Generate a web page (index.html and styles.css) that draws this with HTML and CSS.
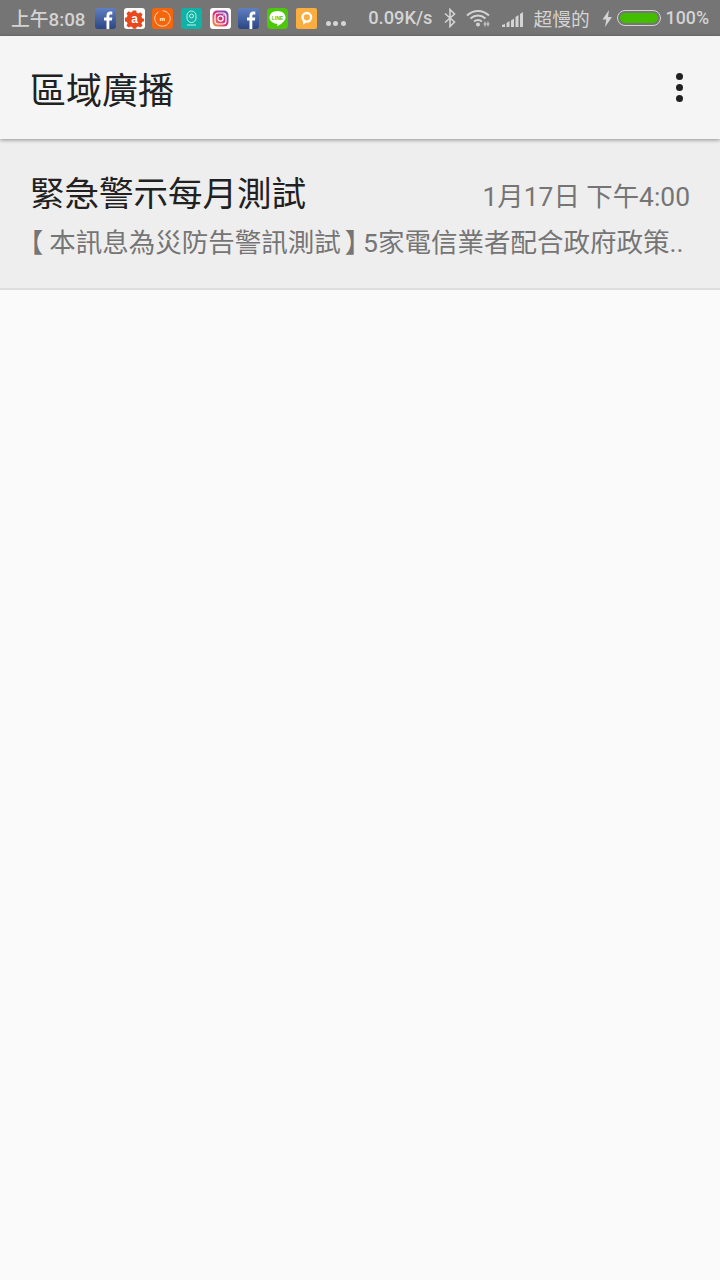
FILE: index.html
```html
<!DOCTYPE html>
<html lang="zh-Hant">

<head>
    <meta charset="UTF-8">
    <meta name="viewport" content="width=device-width, initial-scale=1.0">
    <title>區域廣播</title>
    <link rel="stylesheet" href="styles.css">
</head>

<body>
    <div class="status-bar">
        <span class="status-time">上午8:08</span>
        <div class="status-apps">
            <svg class="app-icon" viewBox="0 0 21 21">
                <defs>
                    <linearGradient id="fbBlue" x1="0" y1="0" x2="0" y2="1">
                        <stop offset="0" stop-color="#5f7fc0"></stop>
                        <stop offset="1" stop-color="#2c4685"></stop>
                    </linearGradient>
                    <linearGradient id="igGrad" x1="0" y1="1" x2="1" y2="0">
                        <stop offset="0" stop-color="#f6a13c"></stop>
                        <stop offset="0.5" stop-color="#d6327f"></stop>
                        <stop offset="1" stop-color="#5b52c8"></stop>
                    </linearGradient>
                </defs>
                <rect width="21" height="21" rx="3" fill="url(#fbBlue)"></rect>
                <path d="M11.5 21v-8.5H9V9.6h2.5V7.6c0-2.6 1.5-4 3.8-4 .9 0 1.7.1 2 .1v2.7h-1.5c-1.2 0-1.5.6-1.5 1.5v1.7h3l-.4 2.9h-2.6V21z" fill="#fff"></path>
            </svg>
            <svg class="app-icon" viewBox="0 0 21 21">
                <rect width="21" height="21" rx="3" fill="#fff"></rect>
                <path d="M8.8 2.5h3.4l.5 2.2 1.6.7 2-1.2 2.3 2.4-1.2 1.9.7 1.7 2 .5v2.6l-2 .6-.7 1.6 1.2 2-2.3 2-2-1-1.6.6-.5 1.6H8.8l-.5-1.6-1.6-.6-2 1-2.3-2 1.2-2-.7-1.6-2-.6V9.7l2-.5.7-1.7-1.2-1.9 2.3-2.4 2 1.2 1.6-.7z" fill="#e9481d"></path>
                <text class="icon-letter" x="10.5" y="14.5" font-size="12" fill="#fff">a</text>
            </svg>
            <svg class="app-icon" viewBox="0 0 21 21">
                <rect width="21" height="21" rx="3" fill="#f4650c"></rect>
                <path d="M6.5 3.9a7.7 7.7 0 1 0 4-1.1" fill="none" stroke="#ffd9bf" stroke-width="1"></path>
                <text class="icon-letter" x="10.5" y="13" font-size="6" fill="#fff">m</text>
            </svg>
            <svg class="app-icon" viewBox="0 0 21 21">
                <rect width="21" height="21" rx="3" fill="#0eb3a6"></rect>
                <rect x="6" y="3" width="9" height="11.5" rx="4.5" fill="none" stroke="#c9f0ec" stroke-width="1"></rect>
                <circle cx="10.5" cy="8" r="2" fill="none" stroke="#c9f0ec" stroke-width="1"></circle>
                <path d="M6 17h9" stroke="#c9f0ec" stroke-width="1"></path>
            </svg>
            <svg class="app-icon" viewBox="0 0 21 21">
                <rect width="21" height="21" rx="3" fill="#fff"></rect>
                <rect x="2.5" y="2.5" width="16" height="16" rx="4.5" fill="url(#igGrad)"></rect>
                <rect x="5" y="5" width="11" height="11" rx="3" fill="none" stroke="#fff" stroke-width="1.2"></rect>
                <circle cx="10.5" cy="10.5" r="2.7" fill="none" stroke="#fff" stroke-width="1.2"></circle>
                <circle cx="14" cy="7" r=".8" fill="#fff"></circle>
            </svg>
            <svg class="app-icon" viewBox="0 0 21 21">
                <rect width="21" height="21" rx="3" fill="url(#fbBlue)"></rect>
                <path d="M11.5 21v-8.5H9V9.6h2.5V7.6c0-2.6 1.5-4 3.8-4 .9 0 1.7.1 2 .1v2.7h-1.5c-1.2 0-1.5.6-1.5 1.5v1.7h3l-.4 2.9h-2.6V21z" fill="#fff"></path>
            </svg>
            <svg class="app-icon" viewBox="0 0 21 21">
                <rect width="21" height="21" rx="4" fill="#4cc70a"></rect>
                <path d="M10.5 3c4.6 0 8 2.8 8 6.5 0 3.2-4.5 6.8-7.8 8.5-.5.2-.4-.5-.3-1.4.1-.7-.3-.8-1-.9C5.4 15.2 2.500 12.700 2.500 9.500 2.500 5.800 5.900 3 10.500 3z" fill="#fff"></path>
                <text class="icon-letter" x="10.5" y="11.5" font-size="5" fill="#4cc70a">LINE</text>
            </svg>
            <svg class="app-icon" viewBox="0 0 21 21">
                <rect width="21" height="21" rx="2" fill="#fbad3f"></rect>
                <circle cx="10.8" cy="9.3" r="4.3" fill="none" stroke="#fff" stroke-width="2.4"></circle>
                <path d="M7 12.5v4.2l3.5-2.5z" fill="#fff"></path>
            </svg>
            <div class="more-dots">
                <i></i><i></i><i></i>
            </div>
        </div>
        <div class="status-right">
            <span class="status-speed">0.09K/s</span>
            <svg class="bt-icon" viewBox="0 0 14 20">
                <path d="M2 5.5l9.5 8.5-4.500 4.500V1.500L11.500 6 2 14.500" fill="none" stroke="#d4d4d4" stroke-width="1.6"></path>
            </svg>
            <svg class="wifi-icon" viewBox="0 0 24 18">
                <path d="M1 6.5C7.5.5 16.5.5 23 6.5" fill="none" stroke="#d4d4d4" stroke-width="1.9"></path>
                <path d="M4.5 9.5c4.5-4 10.500-4 15 0" fill="none" stroke="#d4d4d4" stroke-width="1.9"></path>
                <path d="M8 12.500c2.500-2 5.500-2 8 0" fill="none" stroke="#d4d4d4" stroke-width="1.9"></path>
                <circle cx="12" cy="15.5" r="2" fill="#d4d4d4"></circle>
                <path d="M19 12.5v5M22 12.5v5M17.5 15h6" stroke="#d4d4d4" stroke-width="1"></path>
            </svg>
            <svg class="signal-icon" viewBox="0 0 22 15">
                <path d="M0 13l3-1v3H0zM4.500 11l3-2v6h-3zM9 8.500l3-2V15H9zM13.500 5l3-2v12h-3zM18 2l3-2v15h-3z" fill="#d4d4d4"></path>
            </svg>
            <span class="status-network">超慢的</span>
            <svg class="bolt-icon" viewBox="0 0 11 17">
                <path d="M7 0L.5 9.500h3.800L3 17l7-10H6z" fill="#d4d4d4"></path>
            </svg>
            <div class="battery">
                <div class="battery-fill"></div>
            </div>
            <span class="status-level">100%</span>
        </div>
    </div>

    <header class="toolbar">
        <h1 class="toolbar-title">區域廣播</h1>
        <div class="overflow-menu">
            <i></i><i></i><i></i>
        </div>
    </header>

    <div class="message-row">
        <div class="message-head">
            <span class="message-title">緊急警示每月測試</span>
            <span class="message-date">1月17日 下午4:00</span>
        </div>
        <div class="message-body"><span class="bracket-open">【</span>本訊息為災防告警訊測試<span class="bracket-close">】</span>5家電信業者配合政府政策..</div>
    </div>
</body>

</html>
```

FILE: styles.css
```css
html,
body {
    margin: 0;
    height: 100%;
}

body {
    background-color: #fafafa;
    font-family: Roboto, "Noto Sans CJK TC", sans-serif;
    overflow: hidden;
}

.status-bar {
    display: flex;
    align-items: center;
    justify-content: space-between;
    height: 36px;
    padding: 0 11px;
    box-sizing: border-box;
    background-color: #757575;
    color: #d4d4d4;
    font-size: 18px;
    font-weight: 500;
}

.status-time {
    width: 84px;
    margin-bottom: 2px;
    font-size: 18.8px;
    white-space: nowrap;
}

.status-apps {
    display: flex;
    align-items: center;
    gap: 7.7px;
    flex: 1;
}

.app-icon {
    width: 21px;
    height: 21px;
    flex: none;
}

.icon-letter {
    font-family: "Liberation Sans", sans-serif;
    font-weight: 700;
    text-anchor: middle;
}

.more-dots {
    display: flex;
    gap: 2.5px;
    margin: 11px 0 0 1px;
}

.more-dots i {
    width: 5px;
    height: 5px;
    border-radius: 50%;
    background-color: #d4d4d4;
}

.status-right {
    display: flex;
    align-items: center;
}

.status-speed {
    margin: 0 10px 2px 0;
    font-size: 18.3px;
}

.bt-icon {
    width: 14px;
    height: 20px;
    margin-right: 9px;
}

.wifi-icon {
    width: 24px;
    height: 18px;
    margin-right: 12px;
}

.signal-icon {
    width: 22px;
    height: 15px;
    margin: 2px 10px 0 0;
}

.status-network {
    margin: 0 12px 2px 0;
    font-size: 18.7px;
    font-weight: 400;
}

.bolt-icon {
    width: 11px;
    height: 17px;
    margin-right: 4px;
}

.battery {
    width: 44px;
    height: 16px;
    padding: 2px;
    margin-right: 5px;
    box-sizing: border-box;
    border: 1px solid #d4d4d4;
    border-radius: 8px;
}

.battery-fill {
    height: 100%;
    border-radius: 6px;
    background-color: #43bd00;
}

.status-level {
    margin-bottom: 2px;
    font-size: 17.8px;
}

.toolbar {
    position: relative;
    display: flex;
    align-items: center;
    justify-content: space-between;
    height: 103px;
    padding: 0 30px;
    box-sizing: border-box;
    background-color: #f5f5f5;
    box-shadow: 0 1px 4px rgba(0, 0, 0, 0.4);
}

.toolbar-title {
    margin: 0;
    color: #212121;
    font-size: 36px;
    font-weight: 400;
}

.overflow-menu {
    display: flex;
    flex-direction: column;
    gap: 3.5px;
    margin-right: 7px;
}

.overflow-menu i {
    width: 7.5px;
    height: 7.5px;
    border-radius: 50%;
    background-color: #212121;
}

.message-row {
    height: 151px;
    padding: 33px 30px 0;
    box-sizing: border-box;
    background-color: #eeeeee;
    border-bottom: 2px solid #dedede;
}

.message-head {
    display: flex;
    align-items: center;
    justify-content: space-between;
}

.message-title {
    color: #212121;
    font-size: 34.5px;
    line-height: 44px;
}

.message-date {
    color: #757575;
    font-size: 26.4px;
}

.message-body {
    margin-top: 9px;
    color: #757575;
    font-size: 26.5px;
    line-height: 36px;
    white-space: nowrap;
}

.bracket-open,
.bracket-close {
    font-feature-settings: "halt";
}

.bracket-open {
    margin-right: 6px;
}

.bracket-close {
    margin: 0 5px 0 4px;
}
```
